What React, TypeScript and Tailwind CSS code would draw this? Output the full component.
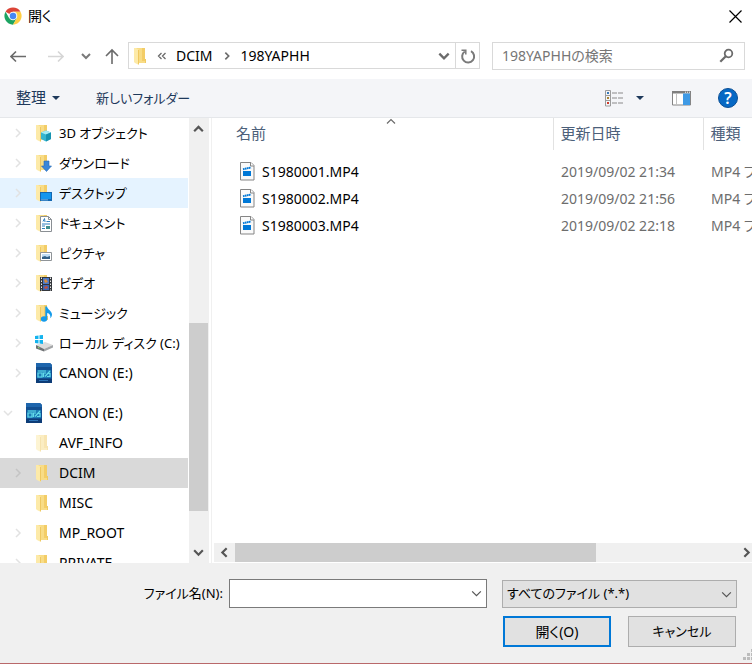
import React from "react";

type Overlay =
  | "cube"
  | "download"
  | "desktop"
  | "document"
  | "picture"
  | "video"
  | "music";

type TreeItem = {
  label: string;
  icon: Overlay | "disk" | "sd" | "folder" | "hidden";
  arrow?: "right" | "down";
  root?: boolean;
  kana?: boolean;
  state?: "hover" | "selected";
};

const treeItems: TreeItem[] = [
  { label: "3D オブジェクト", icon: "cube", arrow: "right", kana: true },
  { label: "ダウンロード", icon: "download", arrow: "right", kana: true },
  { label: "デスクトップ", icon: "desktop", arrow: "right", kana: true, state: "hover" },
  { label: "ドキュメント", icon: "document", arrow: "right", kana: true },
  { label: "ピクチャ", icon: "picture", arrow: "right", kana: true },
  { label: "ビデオ", icon: "video", arrow: "right", kana: true },
  { label: "ミュージック", icon: "music", arrow: "right", kana: true },
  { label: "ローカル ディスク (C:)", icon: "disk", arrow: "right", kana: true },
  { label: "CANON (E:)", icon: "sd", arrow: "right" },
  { label: "CANON (E:)", icon: "sd", arrow: "down", root: true },
  { label: "AVF_INFO", icon: "hidden" },
  { label: "DCIM", icon: "folder", arrow: "right", state: "selected" },
  { label: "MISC", icon: "folder" },
  { label: "MP_ROOT", icon: "folder", arrow: "right" },
  { label: "PRIVATE", icon: "folder", arrow: "right" },
];

const files = [
  { name: "S1980001.MP4", date: "2019/09/02 21:34", type: "MP4 ファイル" },
  { name: "S1980002.MP4", date: "2019/09/02 21:56", type: "MP4 ファイル" },
  { name: "S1980003.MP4", date: "2019/09/02 22:18", type: "MP4 ファイル" },
];

const chevrons = {
  up: "M2 8.5 6 4.5 10 8.5",
  down: "M2 4 6 8 10 4",
  left: "M8 2 4 6 8 10",
  right: "M4 2 8 6 4 10",
};

function Chevron({
  dir,
  size = 12,
  width = 2,
  className = "",
}: {
  dir: keyof typeof chevrons;
  size?: number;
  width?: number;
  className?: string;
}) {
  return (
    <svg
      width={size}
      height={size}
      viewBox="0 0 12 12"
      fill="none"
      stroke="currentColor"
      strokeWidth={width}
      className={`shrink-0 ${className}`}
      aria-hidden="true"
    >
      <path d={chevrons[dir]} />
    </svg>
  );
}

function FolderShape() {
  return (
    <>
      <path d="M3 1h9v15H3z" fill="#f8dc86" />
      <path d="M9 1h3v13H9z" fill="#f3cd67" />
      <path d="M12 12h1v4h-1z" fill="#f0ca62" />
      <path d="M1 1h2l3 2v15l-4-2-1-1z" fill="#fdeaa8" />
      <path d="M5 3h1v14.500l-1-.5z" fill="#efc860" />
    </>
  );
}

function FolderIcon({ faded = false }: { faded?: boolean }) {
  return (
    <svg width="18" height="18" viewBox="0 0 18 18" className={faded ? "shrink-0 opacity-50" : "shrink-0"} aria-hidden="true">
      <FolderShape />
    </svg>
  );
}

function OverlayShape({ kind }: { kind: Overlay }) {
  switch (kind) {
    case "cube":
      return (
        <>
          <path d="M6 8.500 11 6.500 16 8.500V15l-5 2.500L6 15z" fill="#35b6cf" />
          <path d="M6 8.500 11 6.500 16 8.500 11 10.500z" fill="#a5ebf3" />
          <path d="M11 10.500 16 8.500V15l-5 2.500z" fill="#1793b0" />
        </>
      );
    case "download":
      return <path d="M9 7h5v5h2.500L11.500 17.500 6.500 12H9z" fill="#3a86d8" stroke="#2569b4" strokeWidth=".6" />;
    case "desktop":
      return (
        <>
          <path d="M5 8h12v9H5z" fill="#1467b0" />
          <path d="M6 9h10v6H6z" fill="#1496ee" />
          <path d="M6 15.500h7v.8H6z" fill="#8cc8f5" />
        </>
      );
    case "document":
      return (
        <>
          <path d="M5.500 2.500h8l3 3v12h-11z" fill="#fff" stroke="#8a8f94" />
          <path d="M13.500 2.500v3h3" fill="none" stroke="#8a8f94" />
          <path d="M8 7.500 9.500 4.500 10 8M11.500 7.500H15M7 10h8M7 12h3M7 14.500h3" stroke="#2d7fc0" fill="none" />
          <path d="M11 12h4v3h-4z" fill="#3f8e8f" />
        </>
      );
    case "picture":
      return (
        <>
          <path d="M5.500 8.500h11v8h-11z" fill="#fff" stroke="#8f9498" />
          <path d="M7 10h8v5H7z" fill="#bfdcf4" />
          <path d="M7 13l3-1 2 1 3-1v3H7z" fill="#315f86" />
        </>
      );
    case "video":
      return (
        <>
          <path d="M5 3h12v14H5z" fill="#33363b" />
          <path d="M8 4h6v6H8z" fill="#4b79c9" />
          <path d="M8 11h6v5H8z" fill="#3d66b4" />
          <path d="M9 6l2-1 2 3-3 1z" fill="#d98a36" />
          <path d="M9 13l3-1 1 2-3 1z" fill="#c8503a" />
          <path d="M6.500 3.500v13M15.500 3.500v13" stroke="#e8e8e8" strokeDasharray="1.500 1.500" />
        </>
      );
    case "music":
      return (
        <>
          <ellipse cx="9" cy="15" rx="3.200" ry="2.700" fill="#149bea" />
          <path d="M10.300 2.500h1.700c.5 3 5 4.500 5 8 0 1.500-.8 3-1.800 3.800 .8-3-.7-4.800-3-5.300v6h-1.900z" fill="#149bea" />
        </>
      );
  }
}

function SdIcon() {
  return (
    <svg width="18" height="20" viewBox="0 0 18 20" className="shrink-0" aria-hidden="true">
      <path d="M1 0h14l2 2v18H1z" fill="#124f91" />
      <path d="M1 0h14l2 2v2H1z" fill="#1e66ad" />
      <path d="M1 16h16v4H1z" fill="#0d3c77" />
      <path d="M2 7h14v8H2z" fill="#1d7cb5" />
      <path d="M3 8h8M3 10v4h4v-4zM8.500 14v-4h2.500M10 13.500 15 8M12 10.500h3v3h-3" fill="none" stroke="#63dbea" strokeWidth="1.200" />
      <path d="M4 17.500h9" stroke="#2b74b8" />
    </svg>
  );
}

function DiskIcon() {
  return (
    <svg width="20" height="18" viewBox="0 0 20 18" className="shrink-0" aria-hidden="true">
      <path d="M2 11l9-3 8 3-9 4z" fill="#dcdcdc" />
      <path d="M2 11l8 4v2.500l-8-3z" fill="#6f7275" />
      <path d="M10 15l9-4v2.500l-9 4z" fill="#a3a5a7" />
      <path d="M1 2l3.500-.5V5H1zM5.500 1.300 9 1v4H5.500zM1 6h3.500v3.500L1 9zM5.500 6H9v4l-3.500-.4z" fill="#14b3ee" />
      <path d="M4 13.400l1.500.6" stroke="#8be36d" />
    </svg>
  );
}

function TreeIcon({ icon }: { icon: TreeItem["icon"] }) {
  if (icon === "disk") return <DiskIcon />;
  if (icon === "sd") return <SdIcon />;
  if (icon === "folder") return <FolderIcon />;
  if (icon === "hidden") return <FolderIcon faded />;
  return (
    <svg width="18" height="19" viewBox="0 0 18 19" className="shrink-0" aria-hidden="true">
      <FolderShape />
      <OverlayShape kind={icon} />
    </svg>
  );
}

function TreeRow({ item }: { item: TreeItem }) {
  const bg =
    item.state === "hover" ? "bg-[#e5f3ff]" : item.state === "selected" ? "bg-[#d9d9d9]" : "";
  return (
    <li className={item.root ? "mt-[10px]" : ""}>
      <button
        type="button"
        className={`flex h-[30px] w-full items-center text-left whitespace-nowrap ${item.root ? "pl-0.5" : "pl-3"} ${bg}`}
      >
        <span className={`flex w-3 shrink-0 ${item.state === "selected" ? "text-[#c4c4c4]" : "text-[#e2e2e2]"}`}>
          {item.arrow && <Chevron dir={item.arrow} width={1.5} />}
        </span>
        <span className="ml-2.5 flex w-5 shrink-0 justify-center">
          <TreeIcon icon={item.icon} />
        </span>
        <span className={item.kana ? "ml-[5px] text-[13px]" : "ml-[5px]"}>{item.label}</span>
      </button>
    </li>
  );
}

function ChromeIcon() {
  return (
    <svg width="18" height="18" viewBox="0 0 48 48" aria-hidden="true">
      <circle cx="24" cy="24" r="23" fill="#fff" />
      <path d="M24 24 4.100 12.500A23 23 0 0 1 43.900 12.500H24z" fill="#dc4437" />
      <path d="M4.100 12.500A23 23 0 0 0 24 47L34 29.700 24 24 14 29.700z" fill="#1da462" />
      <path d="M43.900 12.500A23 23 0 0 1 24 47L34 29.700 33 15 24 12.500z" fill="#ffce43" />
      <circle cx="24" cy="24" r="11.500" fill="#f4f4f4" />
      <circle cx="24" cy="24" r="8.500" fill="#4687f4" />
    </svg>
  );
}

function Mp4Icon() {
  return (
    <svg width="15" height="19" viewBox="0 0 15 19" className="shrink-0" aria-hidden="true">
      <path d="M.5.500h10.500l3 3v14.500H.5z" fill="#fafafa" stroke="#858585" />
      <path d="M10.500.500v3.500h3.500" fill="#fff" stroke="#858585" />
      <path d="M3 9h8v5H3z" fill="#0078d7" />
      <path d="M3 7.200l8-1.700" stroke="#0078d7" strokeWidth="2" strokeDasharray="1.600 .4" />
    </svg>
  );
}

function Caret() {
  return (
    <svg width="8" height="4" viewBox="0 0 8 4" aria-hidden="true">
      <path d="M0 0h8L4 4z" fill="#1e395b" />
    </svg>
  );
}

function TitleBar() {
  return (
    <header className="flex h-8 items-center gap-1.5 pl-1 pr-2.5">
      <ChromeIcon />
      <h1 className="flex-1">開く</h1>
      <button type="button" aria-label="閉じる">
        <svg width="13" height="13" viewBox="0 0 13 13" stroke="#000" strokeWidth="1.200" aria-hidden="true">
          <path d="M.5.500l12 12M12.500.500l-12 12" />
        </svg>
      </button>
    </header>
  );
}

function AddressBar() {
  return (
    <nav className="flex h-[47px] items-center pr-[7px] pl-2.5" aria-label="アドレス">
      <button type="button" aria-label="戻る" className="text-[#6b6b6b]">
        <svg width="16" height="14" viewBox="0 0 16 14" fill="none" stroke="currentColor" strokeWidth="1.600" aria-hidden="true">
          <path d="M16 7.500H1M6 2.500 1 7.500l5 5" />
        </svg>
      </button>
      <button type="button" aria-label="進む" className="ml-[22px] text-[#d6d6d6]">
        <svg width="16" height="14" viewBox="0 0 16 14" fill="none" stroke="currentColor" strokeWidth="1.600" aria-hidden="true">
          <path d="M0 7.500h15M10 2.500 15 7.500l-5 5" />
        </svg>
      </button>
      <button type="button" aria-label="最近表示した場所" className="ml-4 text-[#7a7a7a]">
        <Chevron dir="down" />
      </button>
      <button type="button" aria-label="上へ" className="ml-[13px] text-[#6b6b6b]">
        <svg width="14" height="16" viewBox="0 0 14 16" fill="none" stroke="currentColor" strokeWidth="1.600" aria-hidden="true">
          <path d="M7 16V2M1 8l6-6 6 6" />
        </svg>
      </button>
      <div className="ml-[9px] flex h-[27px] min-w-0 flex-1 border border-[#d9d9d9]">
        <div className="flex flex-1 items-center pr-1 pl-1">
          <FolderIcon />
          <span className="ml-1.5 flex text-[#6b6b6b]">
            <svg width="10" height="10" viewBox="0 0 10 10" fill="none" stroke="currentColor" strokeWidth="1.300" aria-hidden="true">
              <path d="M4.500 2 1.500 5l3 3M8.500 2l-3 3 3 3" />
            </svg>
          </span>
          <button type="button" className="ml-[9px]">DCIM</button>
          <Chevron dir="right" size={10} className="mx-[9px] text-[#6b6b6b]" />
          <button type="button">198YAPHH</button>
          <button type="button" aria-label="履歴" className="ml-auto text-[#6b6b6b]">
            <Chevron dir="down" size={14} />
          </button>
        </div>
        <button type="button" aria-label="更新" className="flex w-6 items-center justify-center border-l border-[#d9d9d9]">
          <svg width="16" height="16" viewBox="0 0 16 16" fill="none" stroke="#7a7a7a" strokeWidth="2" aria-hidden="true">
            <path d="M11 3.200A6 6 0 1 1 4.800 3.500" />
            <path d="M1.500 2.200h4.300v4.300" strokeWidth="1.500" />
          </svg>
        </button>
      </div>
      <div className="ml-3 flex h-7 w-[253px] items-center border border-[#d9d9d9] pr-2.5 pl-[9px]">
        <input
          type="search"
          aria-label="検索"
          placeholder="198YAPHHの検索"
          className="min-w-0 flex-1 outline-none placeholder:text-[#767676]"
        />
        <svg width="15" height="15" viewBox="0 0 15 15" fill="none" stroke="#6b6b6b" aria-hidden="true">
          <circle cx="9.500" cy="5.500" r="3.800" strokeWidth="1.800" />
          <path d="M6.800 8.300 1.300 13.800" strokeWidth="2.200" />
        </svg>
      </div>
    </nav>
  );
}

function Toolbar() {
  return (
    <div className="flex h-[39px] items-center border-b border-[#e5e7ea] bg-[#f4f5f8] pr-3.5 pl-4 text-[#1e395b]">
      <button type="button" className="flex items-center gap-1.5 text-[15px]">
        整理
        <Caret />
      </button>
      <button type="button" className="ml-9 text-[13px]">新しいフォルダー</button>
      <button type="button" aria-label="表示" className="ml-auto">
        <svg width="19" height="17" viewBox="0 0 19 17" fill="none" aria-hidden="true">
          <path d="M.5.500h5v15.500h-5zM.5 5.500h5M.5 10.500h5" stroke="#9b9b9b" />
          <path d="M2 2h2v2H2z" fill="#3779b8" />
          <path d="M2 7h2v2H2z" fill="#a98533" />
          <path d="M2 12h2v2H2z" fill="#cf3a2b" />
          <path d="M7 3h5M13 3h5M7 8h5M13 8h5M7 13h5M13 13h5" stroke="#8a8a8a" strokeWidth="1.200" />
        </svg>
      </button>
      <button type="button" aria-label="その他のオプション" className="ml-3">
        <Caret />
      </button>
      <button type="button" aria-label="プレビュー ウィンドウ" className="ml-7">
        <svg width="19" height="15" viewBox="0 0 19 15" fill="none" aria-hidden="true">
          <path d="M.5.500h18v13.500H.5z" fill="#fff" stroke="#858585" />
          <path d="M0 0h19v2.500H0z" fill="#7f7f7f" />
          <path d="M13 1.200h5" stroke="#fff" strokeDasharray="1 1" />
          <path d="M4.500 2.500V14" stroke="#c0c0c0" />
          <path d="M11 2.500h7V14h-7z" fill="#3f9ae5" />
        </svg>
      </button>
      <button
        type="button"
        aria-label="ヘルプ"
        className="ml-[27px] flex size-5 items-center justify-center rounded-full border border-[#0b4f95] bg-[#0668c4] text-base font-semibold text-white"
      >
        ?
      </button>
    </div>
  );
}

function TreePane() {
  return (
    <aside className="flex w-[212px] shrink-0 border-r border-[#f0f0f0]">
      <ul className="h-full min-w-0 flex-1 overflow-hidden">
        {treeItems.map((item, i) => (
          <TreeRow key={i} item={item} />
        ))}
      </ul>
      <div className="mr-0.5 ml-px flex w-5 flex-col bg-[#f0f0f0] pr-px text-[#555555]">
        <button type="button" aria-label="上にスクロール" className="flex h-[21px] items-center justify-center">
          <Chevron dir="up" size={13} />
        </button>
        <div className="flex w-full flex-1 flex-col">
          <div className="flex-[184]" />
          <div className="flex-[188] bg-[#cdcdcd]" />
          <div className="flex-[31]" />
        </div>
        <button type="button" aria-label="下にスクロール" className="flex h-[21px] items-center justify-center">
          <Chevron dir="down" size={13} />
        </button>
      </div>
    </aside>
  );
}

function FilePane() {
  return (
    <section className="flex min-w-0 flex-1 flex-col overflow-hidden pl-0.5">
      <div className="min-h-0 flex-1 overflow-hidden pl-3">
        <table className="w-full table-fixed text-left whitespace-nowrap">
          <thead className="text-[15px] text-[#4c607a]">
            <tr>
              <th scope="col" className="relative h-8 pl-2.5 font-normal">
                名前
                <Chevron dir="up" size={12} width={1.2} className="absolute -top-[3px] left-1/2 -ml-1 text-[#6b6b6b]" />
              </th>
              <th scope="col" className="h-8 w-[150px] border-l border-[#e2e2e2] pl-[7px] font-normal">
                更新日時
              </th>
              <th scope="col" className="h-8 w-[49px] border-l border-[#e2e2e2] pl-[7px] font-normal">
                種類
              </th>
            </tr>
          </thead>
          <tbody className="before:block before:h-2">
            {files.map((f) => (
              <tr key={f.name} className="h-[27px] text-[#6d6d6d]">
                <td className="pl-[14px]">
                  <span className="flex items-center gap-[7px] text-black">
                    <Mp4Icon />
                    {f.name}
                  </span>
                </td>
                <td className="pl-2">{f.date}</td>
                <td className="pl-2">{f.type}</td>
              </tr>
            ))}
          </tbody>
        </table>
      </div>
      <div className="mb-px flex h-[19px] items-center bg-[#f0f0f0] text-[#555555]">
        <button type="button" aria-label="左にスクロール" className="flex w-[21px] justify-center">
          <Chevron dir="left" size={13} />
        </button>
        <div className="flex h-full flex-1">
          <div className="flex-[361] bg-[#cdcdcd]" />
          <div className="flex-[144]" />
        </div>
        <button type="button" aria-label="右にスクロール" className="flex w-3 justify-center">
          <Chevron dir="right" size={13} />
        </button>
      </div>
    </section>
  );
}

function Footer() {
  return (
    <footer className="relative h-[101px] border-b border-[#b9686a] bg-[#f0f0f0] pt-4 pr-[15px]">
      <div className="flex items-center">
        <label htmlFor="filename" className="w-[229px] shrink-0 pr-1.5 text-right text-[13px]">
          ファイル名(N):
        </label>
        <div className="flex h-[29px] min-w-0 flex-1 items-center border border-[#7a7a7a] bg-white">
          <input id="filename" type="text" className="h-full min-w-0 flex-1 px-1 outline-none" />
          <button type="button" aria-label="ファイル名の候補" className="flex w-5 justify-center text-[#555555]">
            <Chevron dir="down" size={13} width={1.1} />
          </button>
        </div>
        <div className="relative ml-[15px] w-[235px]">
          <select
            aria-label="ファイルの種類"
            className="h-7 w-full appearance-none border border-[#adadad] bg-[#e1e1e1] pl-1 text-[13px] outline-none"
          >
            <option>すべてのファイル (*.*)</option>
          </select>
          <Chevron dir="down" size={13} width={1.1} className="pointer-events-none absolute top-2 right-1 text-[#555555]" />
        </div>
      </div>
      <div className="mt-2 mr-px flex justify-end gap-[17px]">
        <button type="button" className="h-[31px] w-[108px] border-2 border-[#0078d7] bg-[#e1e1e1]">
          開く(O)
        </button>
        <button type="button" className="h-[31px] w-[108px] border border-[#adadad] bg-[#e1e1e1] text-[13px]">
          キャンセル
        </button>
      </div>
      <svg width="10" height="12" viewBox="0 0 10 12" fill="#bcbcbc" className="absolute right-0 bottom-0.5" aria-hidden="true">
        <path d="M9 0h1v3H9zM5 4h3v3H5zM9 4h1v3H9zM1 8h3v3H1zM5 8h3v3H5zM9 8h1v3H9z" />
      </svg>
    </footer>
  );
}

export default function App() {
  return (
    <main className="flex h-screen flex-col overflow-hidden bg-white font-['Noto_Sans','Noto_Sans_CJK_JP',sans-serif] text-sm text-black [font-feature-settings:'palt']">
      <TitleBar />
      <AddressBar />
      <Toolbar />
      <div className="flex min-h-0 flex-1">
        <TreePane />
        <FilePane />
      </div>
      <Footer />
    </main>
  );
}
